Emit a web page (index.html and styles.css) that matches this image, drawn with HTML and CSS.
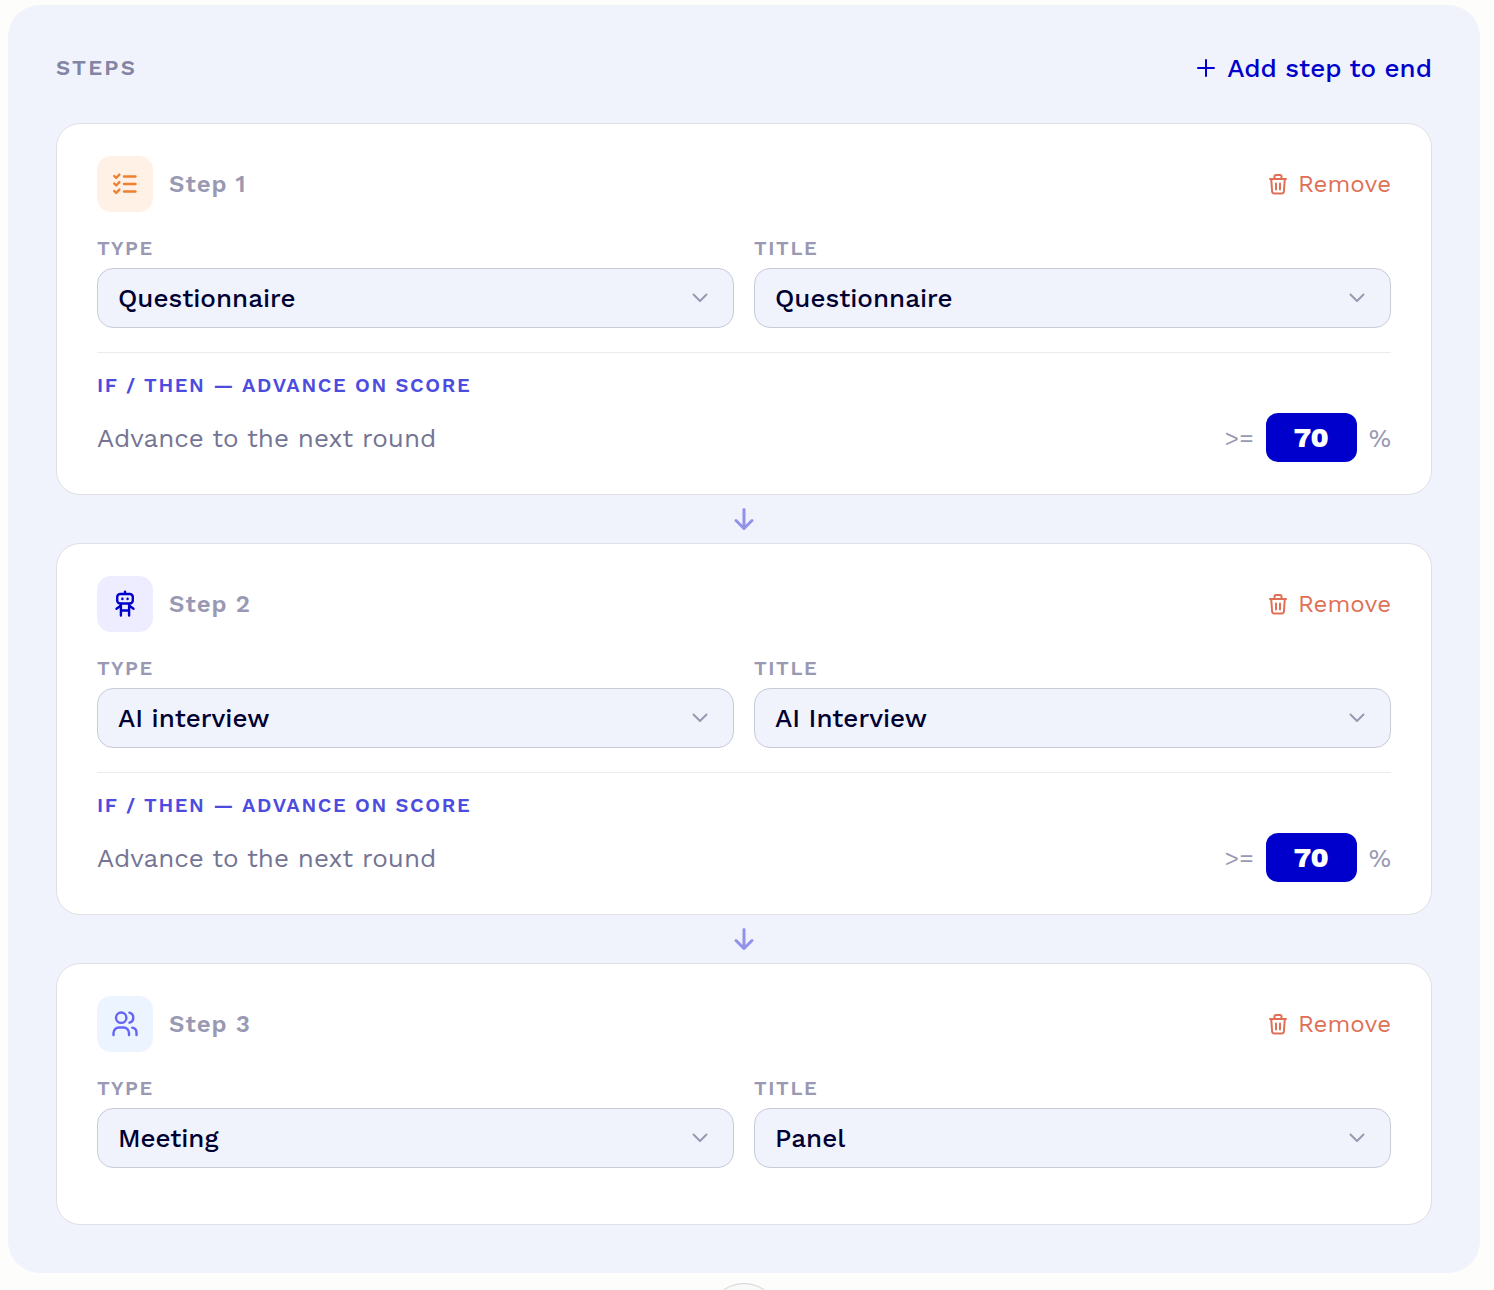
FILE: index.html
```html
<!DOCTYPE html>
<html lang="en">
<head>
<meta charset="utf-8">
<meta name="viewport" content="width=device-width, initial-scale=1">
<title>Steps</title>
<link rel="stylesheet" href="styles.css">
</head>
<body>
<svg class="sprite" aria-hidden="true">
  <symbol id="trash" viewBox="0 0 20 24"><path d="M2 7h16M6.500 7V4.500q0-1.500 1.500-1.500h4q1.500 0 1.500 1.500V7M3.200 7l.9 12.500q.2 2 2.200 2h7.400q2 0 2.200-2L16.800 7M8 11.500v6M12 11.500v6"/></symbol>
  <symbol id="chevron" viewBox="0 0 16 16"><path d="M1.500 4.500 8 11l6.500-6.500"/></symbol>
  <symbol id="arrow" viewBox="0 0 24 24"><path d="M12 2.500v18.500M4 13.500l8 8 8-8"/></symbol>
</svg>
<main class="page">
  <section class="panel" aria-labelledby="steps-heading">
    <header class="panel-header">
      <h2 class="panel-title" id="steps-heading">STEPS</h2>
      <button class="add-step" type="button">
        <svg class="icon-plus" viewBox="0 0 18 18" aria-hidden="true"><path d="M9 1v16M1 9h16"/></svg>
        Add step to end
      </button>
    </header>

    <article class="card">
      <div class="card-header">
        <span class="badge badge-orange"><svg viewBox="0 0 28 28" aria-hidden="true"><path d="M13 6.500h11.500M13 14h11.500M13 21.500h11.500M3.200 6l2 2 3.200-3.400M3.200 13.500l2 2 3.200-3.400M3.200 21l2 2 3.200-3.400"/></svg></span>
        <h3 class="step-name">Step 1</h3>
        <button class="remove" type="button"><svg class="icon-trash" aria-hidden="true"><use href="#trash"/></svg>Remove</button>
      </div>
      <div class="fields">
        <div class="field">
          <label class="label" for="type-1">TYPE</label>
          <div class="select-wrap">
            <select class="select" id="type-1"><option>Questionnaire</option></select>
            <svg class="chevron" aria-hidden="true"><use href="#chevron"/></svg>
          </div>
        </div>
        <div class="field">
          <label class="label" for="title-1">TITLE</label>
          <div class="select-wrap">
            <select class="select" id="title-1"><option>Questionnaire</option></select>
            <svg class="chevron" aria-hidden="true"><use href="#chevron"/></svg>
          </div>
        </div>
      </div>
      <div class="rule">
        <h4 class="rule-title">IF / THEN — ADVANCE ON SCORE</h4>
        <div class="rule-row">
          <label class="rule-text" for="score-1">Advance to the next round</label>
          <span class="sign">&gt;=</span>
          <input class="score" id="score-1" type="text" inputmode="numeric" value="70">
          <span class="unit">%</span>
        </div>
      </div>
    </article>

    <div class="connector"><svg aria-hidden="true"><use href="#arrow"/></svg></div>

    <article class="card">
      <div class="card-header">
        <span class="badge badge-violet"><svg viewBox="0 0 28 28" aria-hidden="true"><rect x="6.200" y="4" width="15.600" height="9.500" rx="3"/><path d="M14 1.800v2M11.400 8.800v.2M16.600 8.800v.2M5.500 18.800l3.800-2.800M22.500 18.800l-3.800-2.800M9.900 14v11.500M18.100 14v11.500M9.900 20.500h8.200"/></svg></span>
        <h3 class="step-name">Step 2</h3>
        <button class="remove" type="button"><svg class="icon-trash" aria-hidden="true"><use href="#trash"/></svg>Remove</button>
      </div>
      <div class="fields">
        <div class="field">
          <label class="label" for="type-2">TYPE</label>
          <div class="select-wrap">
            <select class="select" id="type-2"><option>AI interview</option></select>
            <svg class="chevron" aria-hidden="true"><use href="#chevron"/></svg>
          </div>
        </div>
        <div class="field">
          <label class="label" for="title-2">TITLE</label>
          <div class="select-wrap">
            <select class="select" id="title-2"><option>AI Interview</option></select>
            <svg class="chevron" aria-hidden="true"><use href="#chevron"/></svg>
          </div>
        </div>
      </div>
      <div class="rule">
        <h4 class="rule-title">IF / THEN — ADVANCE ON SCORE</h4>
        <div class="rule-row">
          <label class="rule-text" for="score-2">Advance to the next round</label>
          <span class="sign">&gt;=</span>
          <input class="score" id="score-2" type="text" inputmode="numeric" value="70">
          <span class="unit">%</span>
        </div>
      </div>
    </article>

    <div class="connector"><svg aria-hidden="true"><use href="#arrow"/></svg></div>

    <article class="card">
      <div class="card-header">
        <span class="badge badge-blue"><svg viewBox="0 0 28 28" aria-hidden="true"><circle cx="10.200" cy="7.700" r="5.200"/><path d="M2.500 25v-2a5.500 5.500 0 0 1 5.500-5.500h4.500a5.500 5.500 0 0 1 5.500 5.500v2M18.500 2.700a5.200 5.200 0 0 1 0 10M21.300 17.700a5.300 5.300 0 0 1 4.200 5.300v2"/></svg></span>
        <h3 class="step-name">Step 3</h3>
        <button class="remove" type="button"><svg class="icon-trash" aria-hidden="true"><use href="#trash"/></svg>Remove</button>
      </div>
      <div class="fields">
        <div class="field">
          <label class="label" for="type-3">TYPE</label>
          <div class="select-wrap">
            <select class="select" id="type-3"><option>Meeting</option></select>
            <svg class="chevron" aria-hidden="true"><use href="#chevron"/></svg>
          </div>
        </div>
        <div class="field">
          <label class="label" for="title-3">TITLE</label>
          <div class="select-wrap">
            <select class="select" id="title-3"><option>Panel</option></select>
            <svg class="chevron" aria-hidden="true"><use href="#chevron"/></svg>
          </div>
        </div>
      </div>
    </article>
  </section>
  <button class="round-button" type="button" aria-label="More"></button>
</main>
</body>
</html>
```

FILE: styles.css
```css
* { box-sizing: border-box; }

body {
  margin: 0;
  background: #fdfdfb;
  color: #000033;
  font-family: "Work Sans", Inter, sans-serif;
}

h2, h3, h4 { margin: 0; }

button, input, select { font-family: inherit; }

svg {
  flex: none;
  fill: none;
  stroke: currentColor;
  stroke-width: 2;
  stroke-linecap: round;
  stroke-linejoin: round;
}

.sprite { display: none; }

.page {
  display: flex;
  flex-direction: column;
  height: 100vh;
  padding: 5px 14px 0 8px;
  overflow-y: auto;
  scrollbar-width: none;
}

.panel {
  flex: none;
  padding: 48px;
  border-radius: 32px;
  background: #f0f3fb;
}

.panel-header {
  display: flex;
  align-items: center;
  justify-content: space-between;
  height: 30px;
  margin-bottom: 40px;
}

.panel-title {
  color: #8484a5;
  font-size: 22px;
  font-weight: 600;
  line-height: 30px;
  letter-spacing: 0.1em;
}

.add-step, .remove {
  display: flex;
  align-items: center;
  padding: 0;
  border: 0;
  background: none;
  cursor: pointer;
}

.add-step {
  gap: 12px;
  color: #0000cc;
  font-size: 26px;
  font-weight: 500;
  line-height: 30px;
}

.icon-plus { width: 18px; height: 18px; }

.card {
  padding: 32px 40px;
  border: 1px solid #dfdfe6;
  border-radius: 24px;
  background: #fff;
}

.card-header {
  display: flex;
  align-items: center;
  gap: 16px;
  margin-bottom: 24px;
}

.badge {
  display: grid;
  place-items: center;
  width: 56px;
  height: 56px;
  border-radius: 14px;
}

.badge svg { width: 28px; height: 28px; stroke-width: 2.4; }
.badge-orange { background: #fff1e6; color: #f08030; }
.badge-violet { background: #eeedff; color: #0000cc; }
.badge-blue { background: #ecf4ff; color: #6464fa; }

.step-name {
  color: #9999b3;
  font-size: 24px;
  font-weight: 600;
  line-height: 32px;
  letter-spacing: 0.04em;
}

.remove {
  gap: 10px;
  margin-left: auto;
  color: #e07055;
  font-size: 24px;
  line-height: 32px;
}

.icon-trash { width: 20px; height: 24px; }

.fields {
  display: grid;
  grid-template-columns: 1fr 1fr;
  gap: 20px;
  margin-bottom: 24px;
}

.label {
  display: block;
  margin-bottom: 8px;
  color: #9999b3;
  font-size: 20px;
  font-weight: 600;
  line-height: 24px;
  letter-spacing: 0.08em;
}

.select-wrap { position: relative; }

.select {
  display: block;
  width: 100%;
  height: 60px;
  padding: 0 56px 0 20px;
  border: 1px solid #c8cbda;
  border-radius: 16px;
  background: #f0f3fb;
  color: #000033;
  font-size: 26px;
  font-weight: 500;
  appearance: none;
}

.chevron {
  position: absolute;
  top: 22px;
  right: 26px;
  width: 16px;
  height: 16px;
  color: #9999b3;
  pointer-events: none;
}

.rule {
  padding-top: 20px;
  border-top: 1px solid #ebebed;
}

.rule-title {
  margin-bottom: 16px;
  color: #4c4cdf;
  font-size: 20px;
  font-weight: 600;
  line-height: 24px;
  letter-spacing: 0.08em;
}

.rule-row {
  display: flex;
  align-items: center;
  gap: 12px;
  font-size: 26px;
}

.rule-text { flex: 1; color: #747494; }

.sign, .unit { color: #9999b3; }
.sign { font-size: 24px; }

.score {
  width: 91px;
  height: 49px;
  padding: 0;
  border: 0;
  border-radius: 12px;
  background: #0000cc;
  color: #fff;
  font-size: 28px;
  font-weight: 800;
  text-align: center;
}

.connector {
  display: grid;
  place-items: center;
  height: 48px;
  color: #9292ea;
}

.connector svg { width: 24px; height: 24px; stroke-width: 3; }

.round-button {
  flex: none;
  align-self: center;
  width: 72px;
  height: 72px;
  margin-top: 10px;
  border: 1px solid #d4d4d8;
  border-radius: 50%;
  background: #f9f9f9;
}
```
